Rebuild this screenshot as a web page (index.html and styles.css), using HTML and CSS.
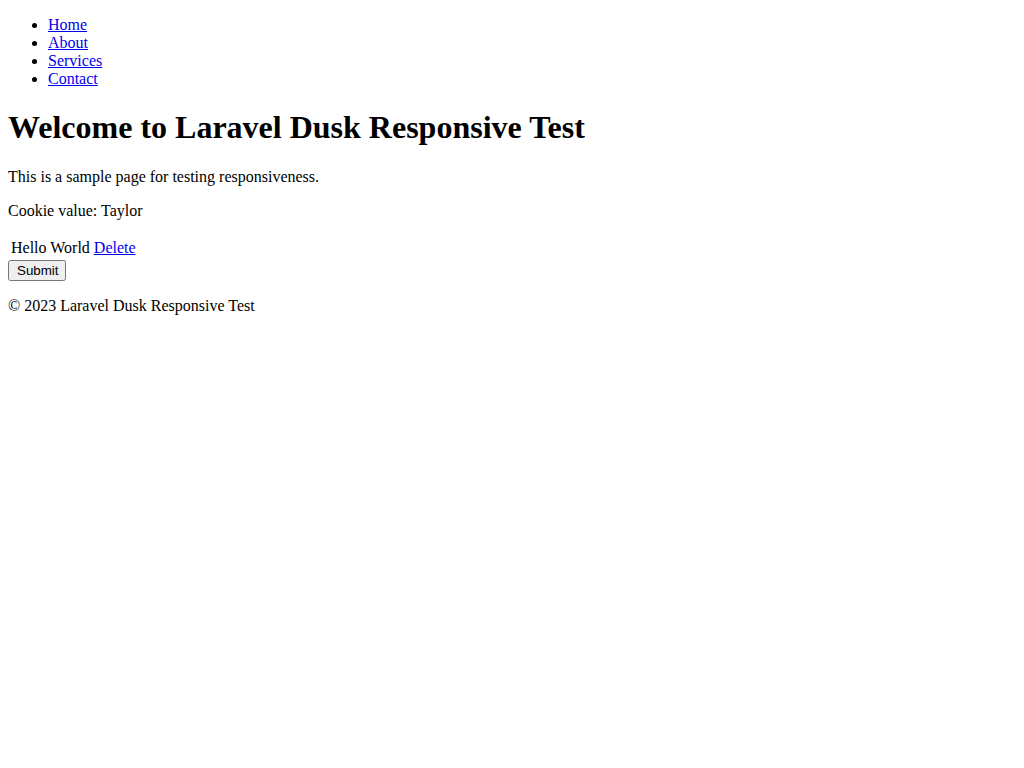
FILE: index.html
```html
<!DOCTYPE html>
<html>
<head>
<meta charset="utf-8">
<title>Laravel Dusk Responsive Test</title>
<link rel="stylesheet" href="styles.css">
</head>
<body>
<nav class="site-nav">
<ul class="nav-list">
<li><a href="#">Home</a></li>
<li><a href="#">About</a></li>
<li><a href="#">Services</a></li>
<li><a href="#">Contact</a></li>
</ul>
</nav>
<main>
<h1>Welcome to Laravel Dusk Responsive Test</h1>
<p>This is a sample page for testing responsiveness.</p>
<p>Cookie value: Taylor</p>
<form>
<table>
<tr><td>Hello World <a href="#">Delete</a></td></tr>
</table>
<button type="button" class="submit">Submit</button>
</form>
</main>
<footer>
<p>&copy; 2023 Laravel Dusk Responsive Test</p>
</footer>
</body>
</html>
```

FILE: styles.css
```css
body {
  font-family: "Liberation Serif", "Times New Roman", serif;
  color: #000;
  background: #fff;
}
.nav-list {
  margin-top: 8px;
}
.submit {
  font-family: "Liberation Sans", Arial, sans-serif;
  padding: 1px 6px 1px 7px;
}
```
